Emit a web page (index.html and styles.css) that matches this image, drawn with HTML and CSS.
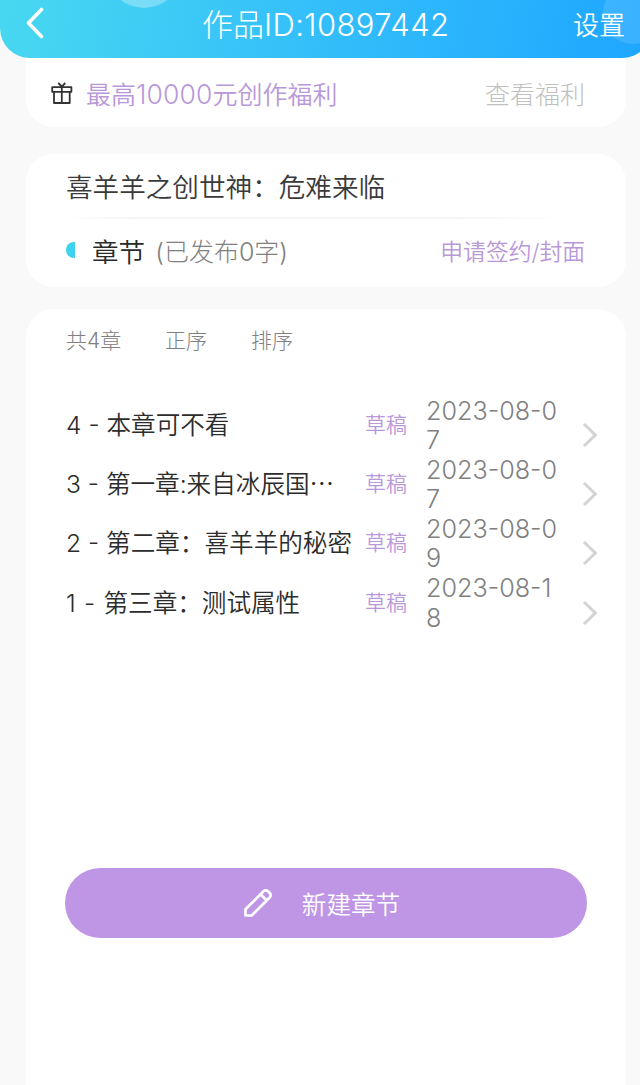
FILE: index.html
```html
<!DOCTYPE html>
<html lang="zh-CN">
<head>
    <meta charset="UTF-8">
    <meta name="viewport" content="width=device-width, initial-scale=1.0">
    <title>作品管理</title>
    <link rel="stylesheet" href="styles.css">
</head>
<body>
    <header class="topbar">
        <span class="bubble bubble-left"></span>
        <span class="bubble bubble-right"></span>
        <svg class="back" width="20" height="34" viewBox="0 0 20 34" fill="none" stroke="#fff" stroke-width="3.6" stroke-linecap="round" stroke-linejoin="round">
            <path d="M17.500 3.500L4.500 17L17.500 30.500"/>
        </svg>
        <h1 class="title">作品<span class="work-id">ID:10897442</span></h1>
        <a class="settings">设置</a>
    </header>

    <section class="card welfare">
        <svg class="gift" width="22" height="23" viewBox="0 0 22 23" fill="none" stroke="#333" stroke-width="1.8" stroke-linejoin="round">
            <path d="M1.200 5.200h19.200v4.600H1.200zM3 9.800v11.200h15.700V9.800M10.800 5.200v15.800M7.300 1l3.500 3.600L14.300 1"/>
        </svg>
        <span class="welfare-text">最高<span class="amount">10000</span>元创作福利</span>
        <a class="welfare-link">查看福利</a>
    </section>

    <section class="card book">
        <h2 class="book-name">喜羊羊之创世神：危难来临</h2>
        <div class="line"></div>
        <div class="book-row">
            <span class="half"></span>
            <span class="label">章节</span>
            <span class="count">(已发布0字)</span>
            <a class="sign">申请签约/封面</a>
        </div>
    </section>

    <section class="card chapters">
        <div class="tabs">
            <span class="total">共4章</span>
            <span class="order">正序</span>
            <span>排序</span>
        </div>

        <ul class="list">
            <li class="item">
                <span class="name"><span class="num">4 - </span>本章可不看</span>
                <span class="status">草稿</span>
                <span class="date">2023-08-07</span>
                <svg class="arrow" width="16" height="26" viewBox="0 0 16 26"><path d="M2 2L13.300 13L2 24"/></svg>
            </li>
            <li class="item">
                <span class="name"><span class="num">3 - </span>第一章:来自冰辰国<span class="dots">⋯</span></span>
                <span class="status">草稿</span>
                <span class="date">2023-08-07</span>
                <svg class="arrow" width="16" height="26" viewBox="0 0 16 26"><path d="M2 2L13.300 13L2 24"/></svg>
            </li>
            <li class="item">
                <span class="name"><span class="num">2 - </span>第二章：喜羊羊的秘密</span>
                <span class="status">草稿</span>
                <span class="date">2023-08-09</span>
                <svg class="arrow" width="16" height="26" viewBox="0 0 16 26"><path d="M2 2L13.300 13L2 24"/></svg>
            </li>
            <li class="item">
                <span class="name"><span class="num num-one">1 - </span>第三章：测试属性</span>
                <span class="status">草稿</span>
                <span class="date">2023-08-18</span>
                <svg class="arrow" width="16" height="26" viewBox="0 0 16 26"><path d="M2 2L13.300 13L2 24"/></svg>
            </li>
        </ul>

        <button class="btn">
            <svg width="30" height="30" viewBox="0 0 30 30" fill="none" stroke="#fff" stroke-width="2.700" stroke-linejoin="round">
                <path d="M2.500 27.500V21.300L20.500 3.300Q22.700 1.300 25 3.300L26.700 5Q28.700 7.300 26.700 9.500L8.700 27.500zM17.500 6.300L23.700 12.500"/>
            </svg>
            <span>新建章节</span>
        </button>
    </section>
</body>
</html>
```

FILE: styles.css
```css
* {
    box-sizing: border-box;
}
body {
    font-family: Inter, "Noto Sans CJK SC", sans-serif;
    font-weight: 300;
    margin: 0;
    height: 1085px;
    overflow: hidden;
    background-color: #f9f9f9;
    display: flex;
    flex-direction: column;
}
h1, h2 {
    margin: 0;
    font-weight: 300;
}
.topbar {
    position: relative;
    z-index: 1;
    flex: none;
    display: flex;
    align-items: center;
    width: 652px;
    height: 58px;
    padding: 0 27px 10px 24px;
    overflow: hidden;
    color: #fff;
    white-space: nowrap;
    border-radius: 0 0 30px 30px;
    background: linear-gradient(100deg, #48d8f0 0%, #33befa 50%, #1ea6ff 100%);
}
.back {
    margin-top: -2px;
}
.title {
    margin: 1px 0 0 158px;
    font-size: 31px;
    line-height: 48px;
}
.work-id {
    font-size: 31px;
    letter-spacing: 0.4px;
}
.settings {
    margin: -1px 0 0 auto;
    font-size: 26px;
    font-weight: 350;
}
.bubble {
    position: absolute;
    border-radius: 50%;
    background: rgba(255, 255, 255, 0.3);
}
.bubble-left {
    width: 76px;
    height: 76px;
    left: 106px;
    top: -68px;
}
.bubble-right {
    width: 60px;
    height: 60px;
    left: 603px;
    top: -16px;
    background: rgba(255, 255, 255, 0.12);
}
.card {
    flex: none;
    width: 600px;
    margin-left: 26px;
    background-color: #fff;
    border-radius: 28px;
    white-space: nowrap;
}
.welfare {
    display: flex;
    align-items: center;
    height: 69px;
    padding: 1px 41px 0 25px;
    border-radius: 0 0 28px 28px;
    font-size: 25px;
}
.welfare-text {
    margin-left: 13px;
    font-weight: 350;
    color: #b998da;
}
.amount {
    font-size: 26.500px;
    font-weight: 300;
    letter-spacing: 0.1px;
}
.welfare-link {
    margin-left: auto;
    color: #c0c0c0;
}
.book {
    height: 133px;
    margin-top: 27px;
    padding: 0 41px 0 40px;
}
.book-name {
    height: 63px;
    font-size: 26.600px;
    font-weight: 350;
    line-height: 66px;
    color: #3a3a3a;
}
.line {
    height: 2px;
    width: 500px;
    background: linear-gradient(90deg, #fff, #f4f4f4 15%, #f4f4f4 75%, #fff);
}
.book-row {
    display: flex;
    align-items: center;
    height: 62px;
}
.half {
    width: 9px;
    height: 16px;
    border-radius: 9px 0 0 9px;
    background-color: #3bd3ef;
}
.label {
    margin-left: 17px;
    font-size: 26.600px;
    font-weight: 350;
    color: #2a2a2a;
}
.count {
    margin-left: 10px;
    font-size: 25px;
    color: #808080;
}
.sign {
    margin-left: auto;
    font-size: 22.800px;
    font-weight: 350;
    color: #b998da;
}
.chapters {
    height: 800px;
    margin-top: 22px;
    padding: 0 39px;
}
.tabs {
    display: flex;
    height: 87px;
    padding-left: 1px;
    font-size: 21px;
    line-height: 64px;
    color: #808080;
}
.total {
    width: 99px;
}
.order {
    width: 86px;
}
.list {
    list-style: none;
    width: 534px;
    margin: 0;
    padding: 0 0 0 1px;
}
.item {
    display: flex;
    align-items: center;
    height: 59.200px;
}
.name {
    width: 299px;
    padding-bottom: 5px;
    font-size: 24.600px;
    font-weight: 350;
    color: #2c2c2c;
}
.num {
    white-space: pre;
}
.num-one {
    letter-spacing: 0.7px;
}
.status {
    width: 61px;
    padding-bottom: 5px;
    font-size: 21px;
    font-weight: 350;
    color: #b998da;
}
.date {
    width: 134px;
    padding-top: 1px;
    font-size: 25.200px;
    line-height: 29.500px;
    color: #808080;
    word-break: break-all;
    white-space: normal;
}
.arrow {
    flex: none;
    margin: 19px 0 0 22px;
    fill: none;
    stroke: #d3d3d3;
    stroke-width: 3;
}
.btn {
    display: flex;
    align-items: center;
    justify-content: center;
    gap: 29px;
    width: 522px;
    height: 70px;
    margin-top: 235px;
    padding: 0 9px 0 0;
    border: none;
    border-radius: 35px;
    background-color: #bf96e6;
    color: #fff;
    font-family: inherit;
    font-size: 24.600px;
    font-weight: 350;
    cursor: pointer;
}
```
